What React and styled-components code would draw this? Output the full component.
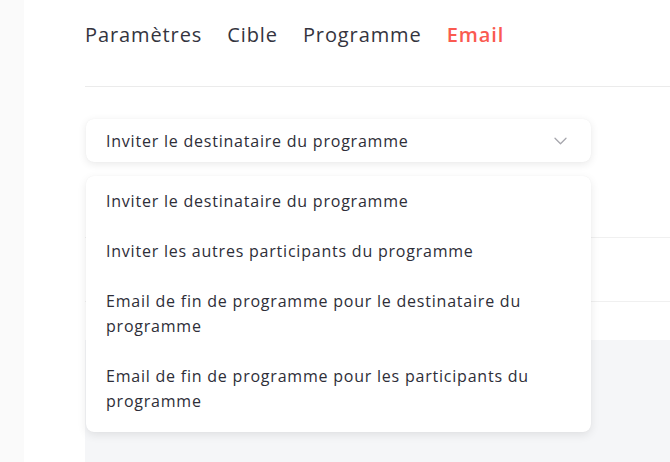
import React from "react";
import styled, { createGlobalStyle } from "styled-components";

const Global = createGlobalStyle`
  html, body { margin: 0; padding: 0; background: #ffffff; }
  body { font-family: "Open Sans", "Liberation Sans", sans-serif; color: #2e2e38; }
  * { box-sizing: border-box; }
`;

const Page = styled.div`
  display: flex;
  width: 670px;
  height: 462px;
  overflow: hidden;
  background: #ffffff;
`;

const SideStrip = styled.div`
  width: 24px;
  flex: none;
  background: #fafafa;
`;

const Main = styled.div`
  flex: 1;
  padding-left: 61px;
  display: flex;
  flex-direction: column;
`;

const Tabs = styled.nav`
  display: flex;
  gap: 25px;
  height: 87px;
  border-bottom: 1px solid #ebebeb;
  padding-top: 20px;
`;

const Tab = styled.div`
  position: relative;
  font-size: 20px;
  line-height: 30px;
  font-weight: ${(p) => (p.$active ? 600 : 400)};
  color: ${(p) => (p.$active ? "#fa5a50" : "#34343e")};
  letter-spacing: 0.9px;
  &::after {
    content: "";
    display: ${(p) => (p.$active ? "block" : "none")};
    position: absolute;
    left: 0;
    right: 1px;
    bottom: -38px;
    height: 3px;
    background: #fa5a50;
  }
`;

const SelectWrap = styled.div`
  position: relative;
  margin-top: 32px;
  width: 505px;
  margin-left: 1px;
`;

const SelectBox = styled.div`
  height: 43px;
  border-radius: 8px;
  background: #fff;
  box-shadow: 0 2px 8px rgba(0, 0, 0, 0.09), 0 0 1px rgba(0, 0, 0, 0.06);
  display: flex;
  align-items: center;
  justify-content: space-between;
  padding: 0 24px 0 20px;
  font-size: 16px;
  letter-spacing: 0.78px;
  color: #2e2e38;
`;

const Menu = styled.ul`
  position: absolute;
  top: 57px;
  left: 0;
  width: 100%;
  margin: 0;
  padding: 0 0 6px;
  list-style: none;
  background: #fff;
  border-radius: 8px;
  box-shadow: 0 3px 10px rgba(0, 0, 0, 0.09), 0 0 1px rgba(0, 0, 0, 0.06);
  z-index: 2;
`;

const Item = styled.li`
  padding: 12.5px 20px;
  font-size: 16px;
  line-height: 25px;
  letter-spacing: 0.78px;
  color: #2e2e38;
`;

const Backdrop = styled.div`
  flex: 1;
  margin-top: 14px;
  display: flex;
  flex-direction: column;
`;

const Row = styled.div`
  height: ${(p) => p.$h}px;
  border-bottom: ${(p) => (p.$line ? "1px solid #f0f0f0" : "none")};
`;

const GrayArea = styled.div`
  flex: 1;
  background: #f5f6f8;
`;

const Chevron = () => (
  <svg width="13" height="8" viewBox="0 0 13 8" fill="none">
    <path d="M1 1.2l5.5 5.5 5.5-5.5" stroke="#a6a6ad" strokeWidth="1.3" strokeLinecap="round" strokeLinejoin="round" />
  </svg>
);

const options = [
  "Inviter le destinataire du programme",
  "Inviter les autres participants du programme",
  "Email de fin de programme pour le destinataire du programme",
  "Email de fin de programme pour les participants du programme",
];

export default function App() {
  return (
    <Page>
      <Global />
      <SideStrip />
      <Main>
        <Tabs>
          <Tab>Paramètres</Tab>
          <Tab>Cible</Tab>
          <Tab>Programme</Tab>
          <Tab $active>Email</Tab>
        </Tabs>
        <SelectWrap>
          <SelectBox>
            <span>{options[0]}</span>
            <Chevron />
          </SelectBox>
          <Menu>
            {options.map((o) => (
              <Item key={o}>{o}</Item>
            ))}
          </Menu>
        </SelectWrap>
        <Backdrop>
          <Row $h={62} $line />
          <Row $h={64} $line />
          <Row $h={38} />
          <GrayArea />
        </Backdrop>
      </Main>
    </Page>
  );
}
